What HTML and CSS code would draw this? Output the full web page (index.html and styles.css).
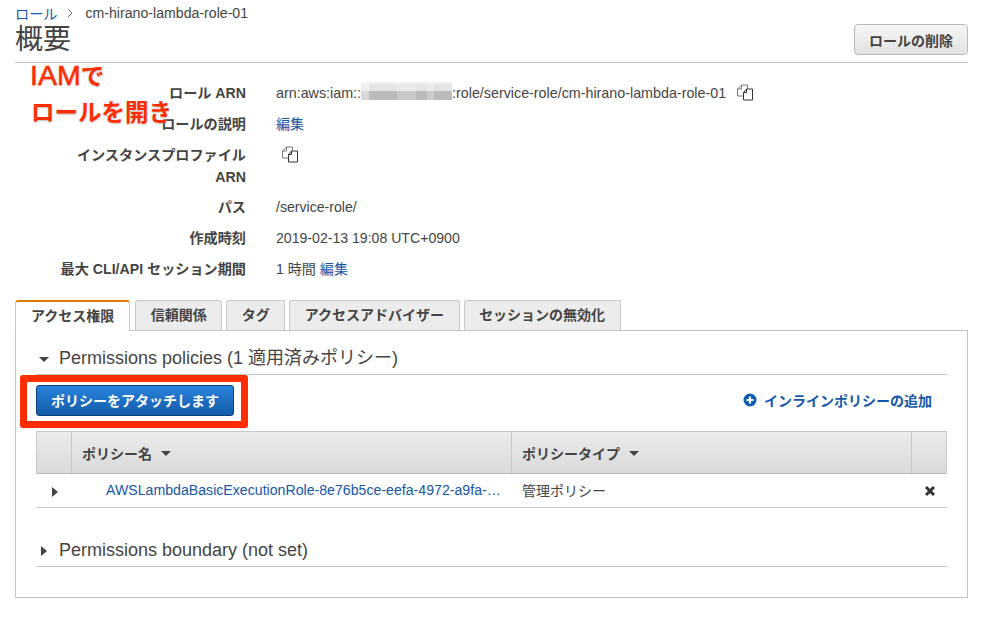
FILE: index.html
```html
<!DOCTYPE html>
<html lang="ja">
<head>
<meta charset="utf-8">
<title>概要</title>
<link rel="stylesheet" href="styles.css">
</head>
<body>
<main class="page">
  <nav class="crumbs"><a class="link">ロール</a><svg class="chev" width="8" height="10" viewBox="0 0 8 10"><path d="M2 1l4 4-4 4" fill="none" stroke="#666" stroke-width="1"/></svg><span>cm-hirano-lambda-role-01</span></nav>
  <header class="head">
    <h1>概要</h1>
    <button class="btn-grey">ロールの削除</button>
  </header>
  <dl class="summary">
    <div class="row r-arn"><dt>ロール ARN</dt><dd class="arn">arn:aws:iam::<span class="blur"></span>:role/service-role/cm-hirano-lambda-role-01<svg class="copy copy-a" width="17" height="17" viewBox="0 0 17 17"><use href="#copy"/></svg></dd></div>
    <div class="row"><dt>ロールの説明</dt><dd><a class="link">編集</a></dd></div>
    <div class="row r-tall"><dt>インスタンスプロファイル ARN</dt><dd><svg class="copy copy-b" width="17" height="17" viewBox="0 0 17 17"><use href="#copy"/></svg></dd></div>
    <div class="row"><dt>パス</dt><dd>/service-role/</dd></div>
    <div class="row"><dt>作成時刻</dt><dd>2019-02-13 19:08 UTC+0900</dd></div>
    <div class="row"><dt>最大 CLI/API セッション期間</dt><dd>1 時間 <a class="link">編集</a></dd></div>
  </dl>
  <div class="tabs">
    <div class="tab active">アクセス権限</div>
    <div class="tab">信頼関係</div>
    <div class="tab">タグ</div>
    <div class="tab">アクセスアドバイザー</div>
    <div class="tab">セッションの無効化</div>
  </div>
  <section class="panel">
    <h2 class="sec"><i class="tri-down"></i>Permissions policies (1 適用済みポリシー)</h2>
    <div class="actions">
      <button class="btn-blue">ポリシーをアタッチします</button>
      <a class="add"><svg width="14" height="14" viewBox="0 0 14 14"><circle cx="7" cy="7" r="6.5" fill="#0f5cb0"/><path d="M7 3.500v7M3.500 7h7" stroke="#fff" stroke-width="2.2"/></svg>インラインポリシーの追加</a>
    </div>
    <div class="table">
      <div class="thead">
        <div class="th c1"></div>
        <div class="th c2">ポリシー名<i class="tri-down small"></i></div>
        <div class="th c3">ポリシータイプ<i class="tri-down small"></i></div>
        <div class="th c4"></div>
      </div>
      <div class="tr">
        <div class="c1 cell"><i class="tri-right"></i></div>
        <div class="c2 cell name"><a class="link">AWSLambdaBasicExecutionRole-8e76b5ce-eefa-4972-a9fa-…</a></div>
        <div class="c3 cell type">管理ポリシー</div>
        <div class="c4 cell"><svg width="12" height="12" viewBox="0 0 12 12"><path d="M2 2l8 8M10 2l-8 8" stroke="#333" stroke-width="3"/></svg></div>
      </div>
    </div>
    <h2 class="sec sec2"><i class="tri-right big"></i>Permissions boundary (not set)</h2>
  </section>
</main>
<div class="note n1"><span class="latin">IAM</span>で</div>
<div class="note n2">ロールを開き</div>
<div class="redbox"></div>
<svg class="defs" width="0" height="0"><defs><g id="copy"><path d="M0.500 5 L4.500 1 H10.500 V12 H0.500 Z" fill="#fff" stroke="#777"/><path d="M4.500 1V5H0.500" fill="none" stroke="#777"/><path d="M6.500 8.500 L9.500 5 H15.500 V16 H6.500 Z" fill="#fff" stroke="#333"/><path d="M9.500 5V8.500H6.500" fill="none" stroke="#333"/></g></defs></svg>
</body>
</html>
```

FILE: styles.css
```css
* { box-sizing: border-box; }
html, body { margin: 0; padding: 0; background: #fff; }
body {
  position: relative;
  height: 619px;
  overflow: hidden;
  font-family: "Liberation Sans", "Noto Sans CJK JP", sans-serif;
  font-size: 14.15px;
  color: #333;
}
.page { padding: 4px 15px 0; width: 983px; }
.link { color: #1557a8; text-decoration: none; }
.crumbs { display: flex; align-items: center; height: 18px; color: #444; }
.chev { margin: 0 11px 0 9px; }
.head {
  display: flex; justify-content: space-between; align-items: flex-start;
  height: 41px; border-bottom: 1px solid #c4c4c4;
}
h1 { margin: 0; font-size: 28px; font-weight: 400; line-height: 36px; color: #444; }
.btn-grey {
  width: 114px; height: 31px; margin-top: 2px;
  border: 1px solid #bbb; border-radius: 4px;
  background: linear-gradient(#f6f6f6, #e2e2e2);
  font: bold 14px "Liberation Sans", "Noto Sans CJK JP", sans-serif; color: #444;
}
.summary { margin: 19px 0 0; }
.row { display: flex; height: 31px; line-height: 22px; }
.r-tall { height: 52px; }
.row dt { width: 231px; padding-left: 40px; text-align: right; font-weight: bold; color: #444; }
.row dd { margin: 0 0 0 30px; display: flex; white-space: pre; align-items: flex-start; color: #444; font-size: 14.1px; }
.row dd.arn { font-size: 14.3px; }
.blur {
  display: inline-block; width: 91px; height: 18px; margin-top: 0;
  background:
    linear-gradient(90deg, rgba(255,255,255,.45) 0 9%, transparent 9% 40%, rgba(255,255,255,.2) 40% 60%, transparent 60% 72%, rgba(255,255,255,.25) 72% 80%, transparent 80%),
    linear-gradient(#f0f0f0 0 12%, #e4e4e4 12% 50%, #bbb 50% 100%);
}
.copy { margin: 2px 0 0 0; }
.copy-a { margin-left: 11px; }
.copy-b { margin-left: 6px; }
.tabs { display: flex; gap: 4px; margin-top: 11px; height: 31px; position: relative; z-index: 1; }
.tab {
  height: 30px; padding: 0 14.5px; line-height: 29px;
  background: #ececec; border: 1px solid #c8c8c8; border-bottom: 0;
  border-radius: 3px 3px 0 0; font-weight: bold; color: #444; font-size: 14px;
}
.tab.active {
  height: 31px; background: #fff; border-top: 2px solid #e07b00;
  border-bottom: 0; line-height: 28px; padding: 0 15px; margin-right: 1px;
}
.panel { height: 268px; margin-top: -1px; border: 1px solid #c4c4c4; padding: 0 20px; }
.sec {
  margin: 14px 0 0; height: 30px; line-height: 26px;
  border-bottom: 1px solid #c4c4c4;
  font-size: 18px; font-weight: 400; color: #444;
  display: flex; align-items: center; padding-bottom: 3px;
}
.sec2 { margin-top: 28px; height: 31px; }
.tri-down {
  display: inline-block; width: 0; height: 0; margin: 2px 10px 0 3px;
  border-left: 5px solid transparent; border-right: 5px solid transparent; border-top: 5px solid #444;
}
.tri-down.small { margin: 2px 0 0 9px; }
.tri-right {
  display: inline-block; width: 0; height: 0;
  border-top: 5px solid transparent; border-bottom: 5px solid transparent; border-left: 6px solid #444;
}
.tri-right.big { margin: 2px 12px 0 5px; }
.actions { display: flex; justify-content: space-between; align-items: center; height: 56px; padding-bottom: 6px; }
.btn-blue {
  width: 198px; height: 31px; border: 1px solid #0d3f80; border-radius: 3px;
  background: linear-gradient(#2a83dc, #125ba8);
  font: bold 14px "Liberation Sans", "Noto Sans CJK JP", sans-serif; color: #fff;
}
.add { display: flex; align-items: center; gap: 7px; margin-right: 15px; font-weight: bold; font-size: 14px; color: #1557a8; }
.table { display: block; }
.thead, .tr { display: grid; grid-template-columns: 35px 440px 400px 35px; }
.thead {
  height: 43px; background: linear-gradient(#ebebeb, #dadada);
  border: 1px solid #c8c8c8; border-bottom: 1px solid #bbb;
}
.th { display: flex; align-items: center; padding-left: 10px; font-weight: bold; color: #444; border-right: 1px solid #c8c8c8; font-size: 14px; }
.th.c4 { border-right: 0; }
.tr { height: 34px; border-bottom: 1px solid #c8c8c8; }
.cell { display: flex; align-items: center; white-space: nowrap; overflow: hidden; }
.tr .c1 { padding-left: 16px; padding-top: 2px; }
.name { padding-left: 35px; padding-bottom: 2px; }
.type { padding-left: 11px; padding-bottom: 2px; font-size: 14px; color: #444; }
.tr .c4 { padding-left: 13px; }
.note {
  position: absolute; font-size: 23.5px; line-height: 30px; font-weight: bold; color: #ff2d00;
  text-shadow: 0 1px 2px rgba(0,0,0,.25), 0 0 2px #fff;
}
.latin { font-size: 28.5px; font-weight: 400; -webkit-text-stroke: .5px #ff2d00; }
.n1 { left: 30px; top: 60px; }
.n2 { left: 31px; top: 98px; }
.redbox {
  position: absolute; left: 20px; top: 375px; width: 228px; height: 53px;
  border: 7px solid #ff2d00; border-radius: 3px;
}
.defs { position: absolute; }
```
